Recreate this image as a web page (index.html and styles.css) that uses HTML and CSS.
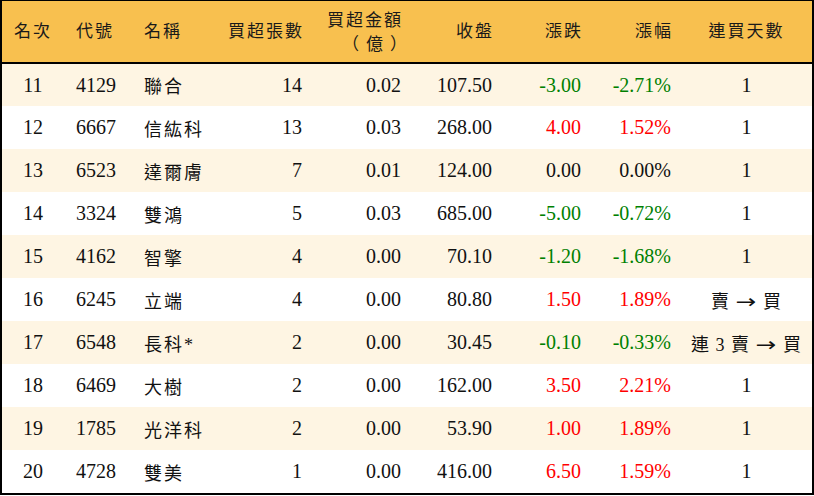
FILE: index.html
```html
<!DOCTYPE html>
<html lang="zh-Hant">
<head>
<meta charset="utf-8">
<title>買超排行</title>
<link rel="stylesheet" href="styles.css">
</head>
<body>
<div class="frame">
<table class="rank">
  <colgroup>
    <col class="c1"><col class="c2"><col class="c3"><col class="c4"><col class="c5"><col class="c6"><col class="c7"><col class="c8"><col class="c9">
  </colgroup>
  <thead>
    <tr>
      <th class="ctr">名次</th>
      <th class="code">代號</th>
      <th class="name">名稱</th>
      <th class="num">買超張數</th>
      <th class="num two"><span>買超金額</span><span class="sub">（億）</span></th>
      <th class="num">收盤</th>
      <th class="num">漲跌</th>
      <th class="num">漲幅</th>
      <th class="ctr last">連買天數</th>
    </tr>
  </thead>
  <tbody>
    <tr class="odd"><td class="ctr">11</td><td class="code">4129</td><td class="name">聯合</td><td class="num">14</td><td class="num">0.02</td><td class="num">107.50</td><td class="num dn">-3.00</td><td class="num dn">-2.71%</td><td class="ctr last">1</td></tr>
    <tr><td class="ctr">12</td><td class="code">6667</td><td class="name">信紘科</td><td class="num">13</td><td class="num">0.03</td><td class="num">268.00</td><td class="num up">4.00</td><td class="num up">1.52%</td><td class="ctr last">1</td></tr>
    <tr class="odd"><td class="ctr">13</td><td class="code">6523</td><td class="name">達爾膚</td><td class="num">7</td><td class="num">0.01</td><td class="num">124.00</td><td class="num">0.00</td><td class="num">0.00%</td><td class="ctr last">1</td></tr>
    <tr><td class="ctr">14</td><td class="code">3324</td><td class="name">雙鴻</td><td class="num">5</td><td class="num">0.03</td><td class="num">685.00</td><td class="num dn">-5.00</td><td class="num dn">-0.72%</td><td class="ctr last">1</td></tr>
    <tr class="odd"><td class="ctr">15</td><td class="code">4162</td><td class="name">智擎</td><td class="num">4</td><td class="num">0.00</td><td class="num">70.10</td><td class="num dn">-1.20</td><td class="num dn">-1.68%</td><td class="ctr last">1</td></tr>
    <tr><td class="ctr">16</td><td class="code">6245</td><td class="name">立端</td><td class="num">4</td><td class="num">0.00</td><td class="num">80.80</td><td class="num up">1.50</td><td class="num up">1.89%</td><td class="ctr last zh">賣<span class="arrow">→</span>買</td></tr>
    <tr class="odd"><td class="ctr">17</td><td class="code">6548</td><td class="name">長科*</td><td class="num">2</td><td class="num">0.00</td><td class="num">30.45</td><td class="num dn">-0.10</td><td class="num dn">-0.33%</td><td class="ctr last zh">連 3 賣<span class="arrow">→</span>買</td></tr>
    <tr><td class="ctr">18</td><td class="code">6469</td><td class="name">大樹</td><td class="num">2</td><td class="num">0.00</td><td class="num">162.00</td><td class="num up">3.50</td><td class="num up">2.21%</td><td class="ctr last">1</td></tr>
    <tr class="odd"><td class="ctr">19</td><td class="code">1785</td><td class="name">光洋科</td><td class="num">2</td><td class="num">0.00</td><td class="num">53.90</td><td class="num up">1.00</td><td class="num up">1.89%</td><td class="ctr last">1</td></tr>
    <tr><td class="ctr">20</td><td class="code">4728</td><td class="name">雙美</td><td class="num">1</td><td class="num">0.00</td><td class="num">416.00</td><td class="num up">6.50</td><td class="num up">1.59%</td><td class="ctr last">1</td></tr>
  </tbody>
</table>
</div>
</body>
</html>
```

FILE: styles.css
```css
html, body {
  margin: 0;
  padding: 0;
  background: #ffffff;
}

.frame {
  width: 810px;
  border-top: 1px solid #000;
  border-left: 2px solid #000;
  border-right: 2px solid #000;
  border-bottom: 2px solid #000;
}

.rank {
  width: 810px;
  table-layout: fixed;
  border-collapse: collapse;
  font-family: "Liberation Serif", "Noto Sans CJK TC", serif;
  font-size: 20px;
  color: #111;
}

.c1 { width: 62px; }
.c2 { width: 60px; }
.c3 { width: 90px; }
.c4 { width: 98px; }
.c5 { width: 99px; }
.c6 { width: 91px; }
.c7 { width: 89px; }
.c8 { width: 90px; }
.c9 { width: 131px; }

.rank thead tr {
  background: #f8c04f;
  height: 62px;
  border-bottom: 2px solid #000;
}

.rank th {
  font-weight: normal;
  font-size: 17px;
  letter-spacing: 2px;
  padding: 0;
  color: #1a1a1a;
  line-height: 22px;
  vertical-align: middle;
}

.rank th.two span {
  display: block;
}

.rank th.two .sub {
  font-family: "Noto Sans CJK TC", sans-serif;
  letter-spacing: 7px;
  text-align: center;
  margin-left: 30px;
}

.rank tbody tr {
  height: 43px;
  background: #ffffff;
}

.rank tbody tr.odd {
  background: #fef5e3;
}

.rank td {
  padding: 0;
  vertical-align: middle;
  white-space: nowrap;
}

.ctr { text-align: center; }
.code { text-align: left; padding-left: 12px !important; }
.name { text-align: left; padding-left: 20px !important; letter-spacing: 2px; font-size: 18px; }
.num { text-align: right; padding-right: 10px !important; }
th.num { padding-right: 8px !important; }
.last { padding-left: 0; }
td.zh { font-size: 18px; letter-spacing: 1px; }
.arrow {
  display: inline-block;
  font-family: "DejaVu Sans", sans-serif;
  font-size: 19px;
  letter-spacing: 0;
  margin: 0 9px 0 8px;
  transform: scaleX(1.3);
}

.up { color: #ff0000; }
.dn { color: #008000; }
```
